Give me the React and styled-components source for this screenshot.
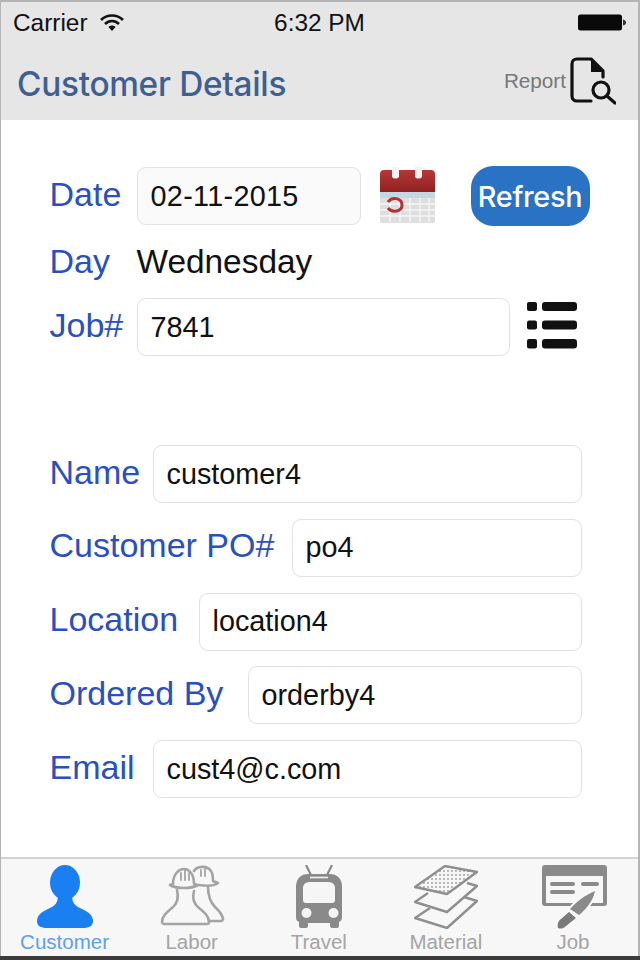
import styled, { createGlobalStyle } from 'styled-components';

const GlobalStyle = createGlobalStyle`
  html, body {
    margin: 0;
    padding: 0;
    background: #3c3c3c;
  }
  * {
    box-sizing: border-box;
  }
`;

const Phone = styled.div`
  width: 640px;
  height: 956px;
  display: flex;
  flex-direction: column;
  background: #fff;
  border: 2px solid #b4b4b4;
  border-left-width: 1.5px;
  border-bottom: 0;
  font-family: 'Liberation Sans', Arial, sans-serif;
  overflow: hidden;
`;

const Header = styled.header`
  height: 118px;
  background: #e6e6e6;
  flex-shrink: 0;
`;

const StatusBar = styled.div`
  height: 40px;
  padding: 1px 12px 0;
  display: grid;
  grid-template-columns: 1fr auto 1fr;
  align-items: center;
  color: #111;
  font-size: 24.4px;
`;

const Carrier = styled.div`
  display: flex;
  align-items: center;
  gap: 12px;
`;

const Battery = styled.div`
  justify-self: end;
  display: flex;
  filter: blur(0.4px);
`;

const NavBar = styled.div`
  height: 78px;
  padding: 0 22px 0 16px;
  display: flex;
  align-items: center;
  justify-content: space-between;
`;

const Title = styled.h1`
  margin: 6px 0 0;
  font-family: Inter, 'Liberation Sans', sans-serif;
  font-size: 33.4px;
  font-weight: 500;
  letter-spacing: -0.3px;
  color: #3f5f92;
`;

const ReportLink = styled.div`
  display: flex;
  align-items: center;
  gap: 4px;
  color: #777;
  font-size: 20.7px;
`;

const Content = styled.main`
  flex: 1;
  padding: 47px 0 0 48.5px;
`;

const Section = styled.section`
  display: flex;
  flex-direction: column;
  gap: 15.75px;
  margin-bottom: ${(p) => p.$after || 0}px;
`;

const Row = styled.div`
  display: flex;
  align-items: center;
  height: 58px;
`;

const DayRow = styled(Row)`
  height: 41.5px;
`;

const Label = styled.div`
  width: ${(p) => p.$width}px;
  flex-shrink: 0;
  font-size: 34px;
  color: #2a50bd;
  padding-bottom: 4px;
  white-space: nowrap;
`;

const DayLabel = styled(Label)`
  padding-bottom: 0;
`;

const Field = styled.div`
  width: ${(p) => p.$width}px;
  height: 58px;
  padding-left: 13px;
  display: flex;
  align-items: center;
  background: ${(p) => (p.$muted ? '#fafafa' : '#fff')};
  border: 1.5px solid #e2e2e2;
  border-radius: 9px;
  font-size: 28.8px;
  letter-spacing: ${(p) => (p.$muted ? '0.3px' : '0')};
  color: #111;
`;

const DayValue = styled.div`
  font-size: 33.4px;
  color: #111;
`;

const CalendarIcon = styled.svg`
  margin-left: 18px;
  filter: blur(0.7px);
`;

const RefreshButton = styled.button`
  width: 119px;
  height: 60px;
  margin-left: 35px;
  padding: 0;
  border: 0;
  border-radius: 22px;
  background: #2a72c3;
  color: #fff;
  font-family: Inter, 'Liberation Sans', sans-serif;
  font-size: 28.8px;
  font-weight: 500;
  letter-spacing: -0.3px;
`;

const ListIcon = styled.svg`
  margin: 0 0 4px 17px;
  filter: blur(0.5px);
`;

const TabBar = styled.nav`
  height: 99px;
  flex-shrink: 0;
  padding: 6px 1.5px 0 0;
  display: grid;
  grid-template-columns: repeat(5, 1fr);
  background: #f8f7f8;
  border-top: 2px solid #d2d2d2;
`;

const Tab = styled.div`
  display: flex;
  flex-direction: column;
  align-items: center;
  color: ${(p) => (p.$active ? '#5ba0ee' : '#a4a4a4')};
  font-size: 20.5px;
`;

const TabIcon = styled.svg`
  display: block;
  height: 64px;
  margin-bottom: 1px;
  filter: blur(0.5px);
`;

const secondRows = [
  { label: 'Name', width: 103, value: 'customer4', fieldWidth: 429 },
  { label: 'Customer PO#', width: 242, value: 'po4', fieldWidth: 290 },
  { label: 'Location', width: 149, value: 'location4', fieldWidth: 383 },
  { label: 'Ordered By', width: 198, value: 'orderby4', fieldWidth: 334 },
  { label: 'Email', width: 103, value: 'cust4@c.com', fieldWidth: 429 },
];

const PersonGlyph = () => (
  <TabIcon width="56" viewBox="0 0 56 64">
    <g fill="#1a7ff0">
      <ellipse cx="28" cy="17.5" rx="15" ry="17.5" />
      <path d="M21 30C21 38 18 41 11 44C4 47 0 51 0 56C0 61 4 63 10 63H46C52 63 56 61 56 56C56 51 52 47 45 44C38 41 35 38 35 30Z" />
    </g>
  </TabIcon>
);

const LaborGlyph = () => (
  <TabIcon width="66" viewBox="0 0 66 64">
    <g fill="none" stroke="#a4a4a4" strokeWidth="2.6" strokeLinejoin="round" strokeLinecap="round">
      <path d="M35 6C38 1 48 0 52 6C54 9 54 13 54 16L59 18C55 21 46 21 40 20" />
      <path d="M49 21C49 30 51 37 56 42C59 45 63 48 64 54C64 55 63 56 62 56H51" />
      <path d="M14 19C14 9 20 4 25 4C31 4 35 10 35 19L39 20C32 24 18 24 11 20Z" />
      <path d="M18 25C20 33 18 39 13 43C8 47 3 51 3 57C3 58 4 59 5 59H48C50 59 50 58 50 57C50 51 45 47 40 43C35 39 33 33 35 26" />
      <path d="M22 8V15M26 5V15M30 8V15" strokeWidth="1.8" />
      <path d="M42 5V11M46 4V11" strokeWidth="1.8" />
    </g>
  </TabIcon>
);

const BusGlyph = () => (
  <TabIcon width="48" viewBox="0 0 48 64">
    <path d="M11 0L16 10M37 0L32 10" stroke="#8a8a8a" strokeWidth="2.2" fill="none" />
    <path fill="#8a8a8a" d="M13 9H35C42 9 46 13 47 20V52C47 55 46 56 44 57V61C44 62 43 63 42 63H37C36 63 35 62 35 61V58H13V61C13 62 12 63 11 63H6C5 63 4 62 4 61V57C2 56 1 55 1 52V20C2 13 6 9 13 9Z" />
    <path d="M15 12.5H33" stroke="#f2f2f2" strokeWidth="1.6" />
    <path fill="#f6f6f6" d="M15 17H33C37 17 40 19 40 23V35C40 37 39 38 37 38H11C9 38 8 37 8 35V23C8 19 11 17 15 17Z" />
    <circle cx="11.5" cy="48" r="5" fill="#f4f4f4" />
    <circle cx="38.5" cy="48" r="5" fill="#f4f4f4" />
  </TabIcon>
);

const MaterialGlyph = () => (
  <TabIcon width="64" viewBox="0 0 64 64">
    <defs>
      <pattern id="dots" width="4" height="4" patternUnits="userSpaceOnUse">
        <circle cx="2" cy="2" r="0.9" fill="#9a9a9a" />
      </pattern>
    </defs>
    <g stroke="#8f8f8f" strokeWidth="2.4" strokeLinejoin="round" fill="none">
      <path d="M16 43L1 53L33 63L63 36L50 32" />
      <path d="M14 28L1 37L33 47L63 21L53 18" />
      <path d="M1 22L31 1L63 7L33 29Z" fill="url(#dots)" />
    </g>
  </TabIcon>
);

const JobGlyph = () => (
  <TabIcon width="68" viewBox="-3 0 68 64">
    <path fill="#8a8a8a" fillRule="evenodd" d="M3 0H62C64 0 65 1 65 3V38C65 40 64 41 62 41H3C1 41 0 40 0 38V3C0 1 1 0 3 0ZM4 11V38H61V11Z" />
    <path d="M10 19H31M10 27H31M41 19H55" stroke="#8a8a8a" strokeWidth="4" strokeLinecap="round" />
    <path fill="#8a8a8a" stroke="#f8f7f8" strokeWidth="4" paintOrder="stroke" d="M53 26C51 36 44 44 37 50L28 44C33 38 43 30 53 26Z" />
    <path fill="#7a7a7a" d="M27 47L34 53L24 61C21 64 18 64 16 63C15 60 16 56 19 54Z" />
  </TabIcon>
);

const App = () => (
  <Phone>
    <GlobalStyle />
    <Header>
      <StatusBar>
        <Carrier>
          Carrier
          <svg width="24" height="17" viewBox="0 0 24 17">
            <g fill="none" stroke="#111" strokeWidth="2.6">
              <path d="M1 6C7 0 17 0 23 6" />
              <path d="M5 10C9 6 15 6 19 10" />
            </g>
            <path d="M8.5 13C10.5 11 13.5 11 15.5 13L12 17Z" fill="#111" />
          </svg>
        </Carrier>
        <span>6:32 PM</span>
        <Battery>
          <svg width="48" height="17" viewBox="0 0 48 17">
            <rect x="0" y="0.5" width="44" height="16" rx="2.5" fill="#0a0a0a" />
            <path d="M45 5.5C47 6 48 7 48 8.5C48 10 47 11 45 11.5Z" fill="#333" />
          </svg>
        </Battery>
      </StatusBar>
      <NavBar>
        <Title>Customer Details</Title>
        <ReportLink>
          <span>Report</span>
          <svg width="46" height="48" viewBox="0 0 46 48">
            <g fill="none" stroke="#111" strokeWidth="3.2" strokeLinecap="round" strokeLinejoin="round">
              <path d="M33 20V14L21 2H7C4 2 2 4 2 7V39C2 42 4 44 7 44H21" />
              <circle cx="31" cy="33" r="8" />
              <path d="M37 39L45 46" />
            </g>
            <path d="M21 1L34 15H21Z" fill="#111" />
          </svg>
        </ReportLink>
      </NavBar>
    </Header>
    <Content>
      <Section $after={89}>
        <Row>
          <Label $width={87}>Date</Label>
          <Field $width={224} $muted>02-11-2015</Field>
          <CalendarIcon width="57" height="58" viewBox="0 0 57 58">
            <defs>
              <linearGradient id="calRed" x1="0" y1="0" x2="0" y2="1">
                <stop offset="0" stopColor="#b93636" />
                <stop offset="1" stopColor="#8e2020" />
              </linearGradient>
            </defs>
            <rect x="1" y="6" width="55" height="50" rx="2" fill="#dedede" />
            <path d="M1 26V7C1 5 2 3 5 3H52C55 3 56 5 56 7V26Z" fill="url(#calRed)" />
            <path d="M13 0H20V10C18 12 15 12 13 10ZM36 0H43V10C41 12 38 12 36 10Z" fill="#f6f2f2" />
            <path d="M1 25H56V31H1Z" fill="#c3d8e4" />
            <g stroke="#f6f6f6" strokeWidth="1.4">
              <path d="M11 31V55M21 31V55M31 31V55M41 31V55M50 31V55M1 37H56M1 43H56M1 49H56" />
            </g>
            <path d="M9 35C13 29 23 31 23 38C23 45 13 46 9 41" fill="none" stroke="#b03234" strokeWidth="3" />
          </CalendarIcon>
          <RefreshButton>Refresh</RefreshButton>
        </Row>
        <DayRow>
          <DayLabel $width={87}>Day</DayLabel>
          <DayValue>Wednesday</DayValue>
        </DayRow>
        <Row>
          <Label $width={87}>Job#</Label>
          <Field $width={373}>7841</Field>
          <ListIcon width="50" height="47" viewBox="0 0 50 47">
            <g fill="#111">
              <rect x="0" y="0" width="10" height="9" rx="2" />
              <rect x="15" y="0" width="35" height="9" rx="3" />
              <rect x="0" y="18.5" width="10" height="9" rx="2" />
              <rect x="15" y="18.5" width="35" height="9" rx="3" />
              <rect x="0" y="37" width="10" height="9.5" rx="2" />
              <rect x="15" y="37" width="35" height="9.5" rx="3" />
            </g>
          </ListIcon>
        </Row>
      </Section>
      <Section>
        {secondRows.map((row) => (
          <Row key={row.label}>
            <Label $width={row.width}>{row.label}</Label>
            <Field $width={row.fieldWidth}>{row.value}</Field>
          </Row>
        ))}
      </Section>
    </Content>
    <TabBar>
      <Tab $active><PersonGlyph />Customer</Tab>
      <Tab><LaborGlyph />Labor</Tab>
      <Tab><BusGlyph />Travel</Tab>
      <Tab><MaterialGlyph />Material</Tab>
      <Tab><JobGlyph />Job</Tab>
    </TabBar>
  </Phone>
);

export default App;
